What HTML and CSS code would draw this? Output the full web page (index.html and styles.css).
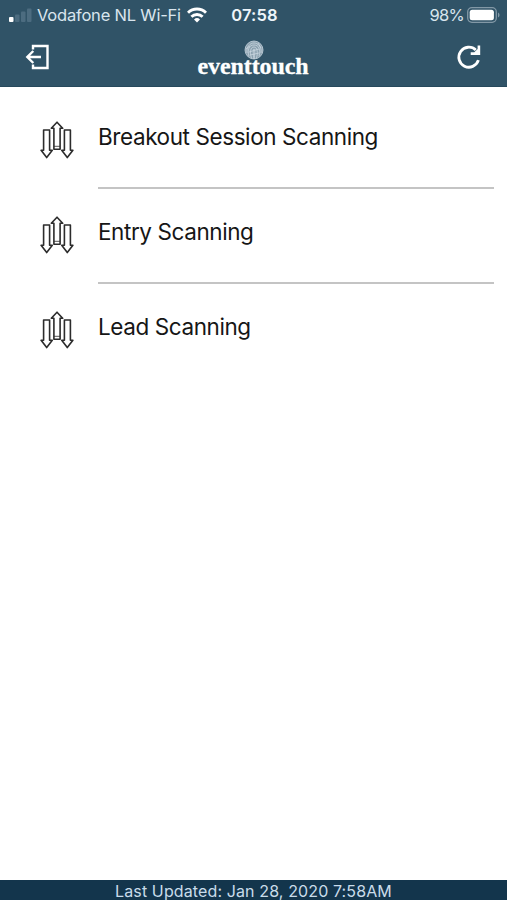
FILE: index.html
```
<!DOCTYPE html>
<html lang="en">
<head>
    <meta charset="UTF-8">
    <meta name="viewport" content="width=device-width, initial-scale=1.0">
    <title>eventtouch</title>
    <link rel="stylesheet" href="styles.css">
</head>
<body>
    <header class="header">
        <div class="status-bar">
            <div class="status-left">
                <svg class="signal" width="23" height="16" viewBox="0 0 23 16">
                    <rect x="0" y="10" width="4.5" height="5" rx="1" fill="#ffffff"/>
                    <rect x="6" y="7.5" width="4.5" height="7.5" rx="1" fill="#4c6c80"/>
                    <rect x="12" y="4.5" width="4.5" height="10.5" rx="1" fill="#4c6c80"/>
                    <rect x="18" y="1.5" width="4.5" height="13.5" rx="1" fill="#4c6c80"/>
                </svg>
                <span class="carrier">Vodafone NL Wi-Fi</span>
                <svg class="wifi" width="20" height="16" viewBox="0 0 20 16" fill="none" stroke="#ffffff" stroke-width="2.9">
                    <path d="M1 5.7a12.8 12.8 0 0 1 18 0"/>
                    <path d="M4.4 9.8a8 8 0 0 1 11.2 0"/>
                    <path d="M10 15.6l-3-3.1a4.3 4.3 0 0 1 6 0z" fill="#ffffff" stroke="none"/>
                </svg>
            </div>
            <span class="clock">07:58</span>
            <div class="status-right">
                <span class="percent">98%</span>
                <svg class="battery" width="33" height="16" viewBox="0 0 33 16">
                    <rect x="0.7" y="0.7" width="28.6" height="14.6" rx="4.2" fill="none" stroke="#8298a6" stroke-width="1.3"/>
                    <rect x="2.7" y="2.7" width="24.2" height="10.6" rx="2.5" fill="#ffffff"/>
                    <path d="M31 5.5c2 .8 2 4.2 0 5z" fill="#8298a6"/>
                </svg>
            </div>
        </div>
        <nav class="nav-bar">
            <a class="nav-icon" href="#" aria-label="Log out">
                <svg width="24" height="26" viewBox="0 0 24 26" fill="none" stroke="#ffffff" stroke-width="2.4">
                    <path d="M8 5.5V2h14.500v22H8v-3.500"/>
                    <path d="M16 13H2M8.300 7L2.300 13l6 6"/>
                </svg>
            </a>
            <div class="logo">
                <!-- fingerprint -->
                <svg class="logo-mark" width="20" height="20" viewBox="0 0 20 20" fill="none" stroke="#c9d6df" stroke-width="0.8">
                    <circle cx="10" cy="10" r="9" fill="#8ca2b0"/>
                    <path d="M3 13c-1-6 3-10 7-10s8 4 7 10M5 16c-2-6 0-11 5-11s7 5 5 11M7.500 18c-2-6-1-11 2.500-11s4 6 2.500 11M10 19c-1-5-1-10 0-10s1 5 0 10M2 9l4-3M14 3l3 5M5 12l10-3M6 15l9-2"/>
                </svg>
                <span class="logo-text">eventtouch</span>
            </div>
            <a class="nav-icon" href="#" aria-label="Refresh">
                <svg width="26" height="26" viewBox="0 0 26 26" fill="none" stroke="#ffffff" stroke-width="2.8">
                    <path d="M22.400 16.200A10 10 0 1 1 19.800 6"/>
                    <path d="M24.200 1.500V11h-9.500V8.300h3.600l3.300-3.300V1.500z" fill="#ffffff" stroke="none"/>
                </svg>
            </a>
        </nav>
    </header>

    <svg class="symbols" width="0" height="0">
        <symbol id="scan" viewBox="0 0 34 38">
            <path d="M3.600 9h6v20.300h2.700L6.700 36.600 1.100 29.300h2.500z"/>
            <path d="M24.400 9h6v20.300h2.500l-5.600 7.300-5.600-7.300h2.700z"/>
            <path d="M13.900 28.300V7.300h-2.600L17 1.200l5.700 6.100h-2.600v21z"/>
            <path d="M14 25.300h6" stroke-width="0.8"/>
        </symbol>
    </svg>

    <main class="menu">
        <a class="menu-item" href="#">
            <svg class="menu-icon"><use href="#scan"/></svg>
            <span class="menu-label">Breakout Session Scanning</span>
        </a>
        <a class="menu-item" href="#">
            <svg class="menu-icon"><use href="#scan"/></svg>
            <span class="menu-label">Entry Scanning</span>
        </a>
        <a class="menu-item" href="#">
            <svg class="menu-icon"><use href="#scan"/></svg>
            <span class="menu-label">Lead Scanning</span>
        </a>
    </main>

    <footer class="footer">Last Updated: Jan 28, 2020 7:58AM</footer>
</body>
</html>
```
FILE: styles.css
```
* {
    box-sizing: border-box;
}
body {
    margin: 0;
    height: 100vh;
    display: flex;
    flex-direction: column;
    font-family: Inter, "Liberation Sans", sans-serif;
    background-color: #ffffff;
    color: #161616;
    overflow: hidden;
}
a {
    color: inherit;
    text-decoration: none;
}
svg {
    display: block;
    flex: none;
}
.header {
    height: 87px;
    flex: none;
    background-color: #305367;
    border-bottom: 1px solid #27495c;
    color: #ffffff;
}
.status-bar {
    height: 29px;
    display: grid;
    grid-template-columns: 1fr auto 1fr;
    align-items: center;
    padding: 0 7px 0 9px;
    white-space: nowrap;
}
.status-left,
.status-right {
    display: flex;
    align-items: center;
}
.status-right {
    justify-content: flex-end;
    gap: 3px;
}
.carrier {
    margin-left: 5px;
    font-size: 16.5px;
    letter-spacing: -0.2px;
    color: #d9e5ee;
}
.wifi {
    margin-left: 6px;
}
.clock {
    font-size: 16.5px;
    font-weight: 600;
    letter-spacing: 0.2px;
    color: #eef5fa;
}
.percent {
    font-size: 16.5px;
    letter-spacing: -0.7px;
    color: #d9e5ee;
}
.nav-bar {
    height: 57px;
    display: flex;
    justify-content: space-between;
    padding: 15px 25px 0 25px;
}
.logo {
    position: relative;
    width: 110px;
}
.logo-text {
    display: block;
    position: relative;
    margin-top: 8px;
    font-family: "Liberation Serif", serif;
    font-size: 24px;
    line-height: 28px;
    font-weight: 700;
    letter-spacing: -0.1px;
    -webkit-text-stroke: 0.3px #ffffff;
    white-space: nowrap;
}
.logo-mark {
    position: absolute;
    left: 46px;
    top: -4px;
}
.symbols {
    position: absolute;
}
.menu {
    flex: 1;
    padding: 7px 13px 0 40px;
}
.menu-item {
    display: flex;
    height: 95px;
}
.menu-icon {
    width: 34px;
    height: 38px;
    margin-top: 27px;
    fill: none;
    stroke: #2c2c2c;
    stroke-width: 1.6;
    stroke-linejoin: round;
}
.menu-label {
    flex: 1;
    margin-left: 24px;
    padding-top: 29px;
    font-size: 22.5px;
    line-height: 28px;
    letter-spacing: -0.41px;
    border-bottom: 2px solid #c4c4c4;
}
.menu-item:last-child .menu-label {
    border-bottom: none;
}
.footer {
    height: 20px;
    flex: none;
    background-color: #13354c;
    color: #c9dcea;
    font-size: 16px;
    line-height: 22px;
    letter-spacing: 0.12px;
    text-align: center;
}
```
